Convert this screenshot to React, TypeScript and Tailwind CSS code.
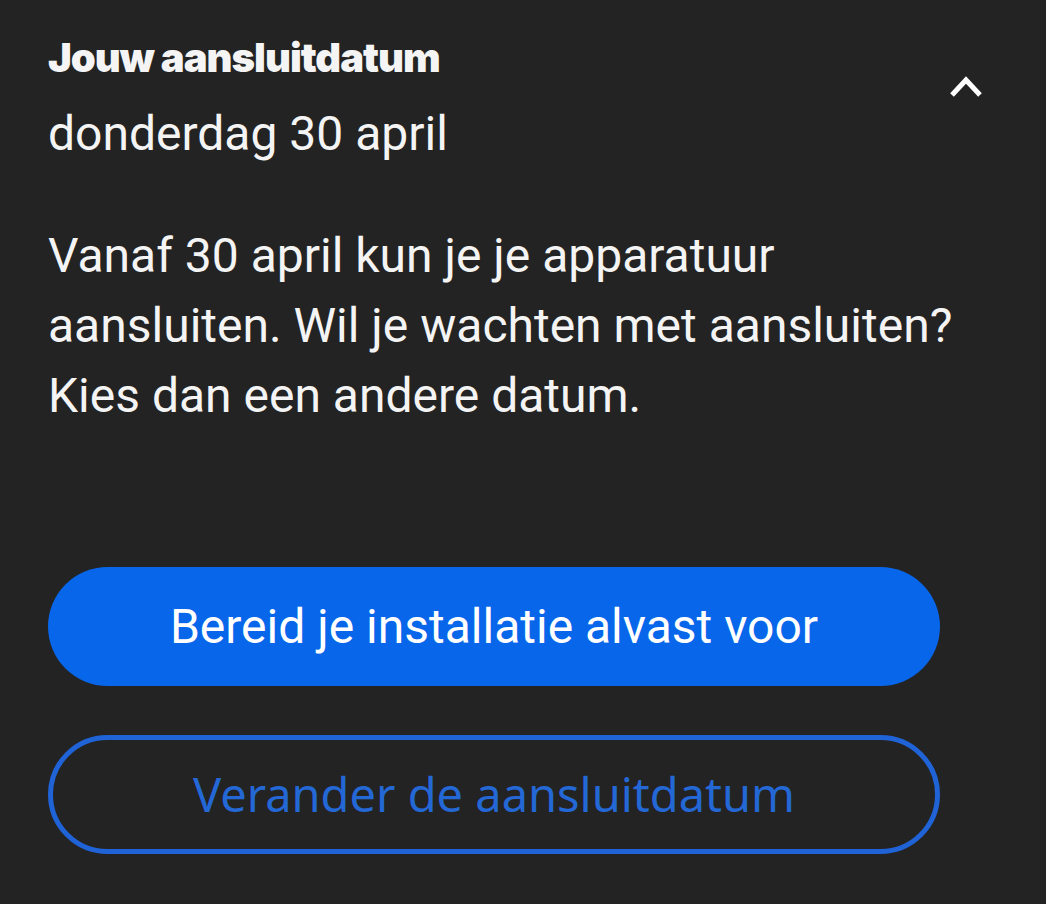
export default function App() {
  return (
    <div className="min-h-[904px] w-[1046px] bg-[#232323] text-[#f4f4f4] font-['Roboto',sans-serif]">
      <div className="pl-12 pt-[34px]">
        <div className="flex items-start justify-between pr-[63px]">
          <div>
            <h2 className="font-['Inter',sans-serif] text-[40px] leading-[48px] font-black tracking-[-1px]">Jouw aansluitdatum</h2>
            <p className="mt-[26px] text-[48px] leading-[52px]">donderdag 30 april</p>
          </div>
          <svg width="34" height="24" viewBox="0 0 34 24" className="mt-[40px]" fill="none">
            <path d="M3 21 L17 6 L31 21" stroke="#ffffff" strokeWidth="5" />
          </svg>
        </div>

        <p className="mt-[61px] w-[960px] text-[48px] leading-[70px]">
          Vanaf 30 april kun je je apparatuur aansluiten. Wil je wachten met aansluiten? Kies dan een andere datum.
        </p>

        <div className="mt-[136px] flex w-[892px] flex-col gap-[49px]">
          <button className="flex h-[119px] items-center justify-center rounded-full bg-[#0866ea] text-[48px] text-white">
            Bereid je installatie alvast voor
          </button>
          <button className="flex h-[119px] items-center justify-center rounded-full border-[5px] border-[#1f63d6] font-['Noto_Sans',sans-serif] text-[47px] text-[#2468d6]">
            Verander de aansluitdatum
          </button>
        </div>
      </div>
    </div>
  );
}
